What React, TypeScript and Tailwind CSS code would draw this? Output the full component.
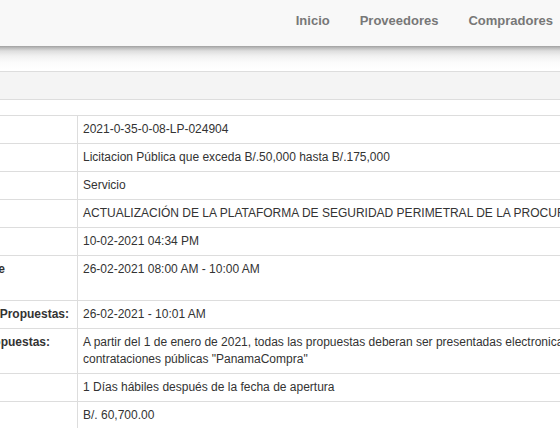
import React from "react";

type Row = {
  label: React.ReactNode;
  labelPad: string;
  value: React.ReactNode;
};

const rows: Row[] = [
  { label: "Número:", labelPad: "pr-[300px]", value: "2021-0-35-0-08-LP-024904" },
  { label: "Modalidad de Contratación:", labelPad: "pr-[200px]", value: "Licitacion Pública que exceda B/.50,000 hasta B/.175,000" },
  { label: "Tipo de Adquisición:", labelPad: "pr-[200px]", value: "Servicio" },
  { label: "Descripción:", labelPad: "pr-[200px]", value: "ACTUALIZACIÓN DE LA PLATAFORMA DE SEGURIDAD PERIMETRAL DE LA PROCURADURÍA DE LA ADMINISTRACIÓN" },
  { label: "Fecha de Publicación:", labelPad: "pr-[200px]", value: "10-02-2021 04:34 PM" },
  {
    label: (
      <>
        <div className="text-right">Fecha y Hora de Presentación de</div>
        <div className="text-left">Propuestas:</div>
      </>
    ),
    labelPad: "pr-[72px]",
    value: "26-02-2021 08:00 AM - 10:00 AM",
  },
  { label: "Fecha y Hora de Apertura de Propuestas:", labelPad: "pr-[8px]", value: "26-02-2021 - 10:01 AM" },
  {
    label: "Forma de Presentación de Propuestas:",
    labelPad: "pr-[27px]",
    value: (
      <>
        <div>A partir del 1 de enero de 2021, todas las propuestas deberan ser presentadas electronicamente en el sistema electrónico de</div>
        <div>contrataciones públicas "PanamaCompra"</div>
      </>
    ),
  },
  { label: "Plazo de Adjudicación:", labelPad: "pr-[200px]", value: "1 Días hábiles después de la fecha de apertura" },
  { label: "Precio de Referencia:", labelPad: "pr-[200px]", value: "B/. 60,700.00" },
];

export default function App() {
  return (
    <div className="w-[560px] h-[428px] overflow-hidden bg-white font-['Liberation_Sans',Arial,sans-serif]">
      {/* Header */}
      <div className="h-[46px] bg-[#f8f8f8] flex justify-end pt-[11px] -mr-[8px]">
        <nav className="flex text-[13px] leading-[20px] font-bold text-[#777777] whitespace-nowrap">
          <span className="px-[15px]">Inicio</span>
          <span className="px-[15px]">Proveedores</span>
          <span className="px-[15px]">Compradores</span>
        </nav>
      </div>
      {/* Shadow */}
      <div className="h-[25px] bg-[linear-gradient(to_bottom,#a0a0a0_0px,#bdbdbd_2px,#dedede_5px,#f1f1f1_10px,#fbfbfb_16px,#ffffff_24px)]" />
      {/* Band */}
      <div className="h-[29px] border-y border-[#dddddd] bg-[#f4f4f4]" />
      <div className="h-[15px]" />
      {/* Table */}
      <div className="-ml-[323px] w-[1400px] border-t border-[#dddddd] text-[12px] leading-[17px] text-[#333333]">
        {rows.map((r, i) => (
          <div key={i} className="flex border-b border-[#dddddd]">
            <div
              className={`w-[401px] shrink-0 border-r border-[#dddddd] py-[5px] pl-[5px] ${r.labelPad} font-bold text-right whitespace-nowrap`}
            >
              {r.label}
            </div>
            <div className="flex-1 py-[5px] px-[5px] whitespace-nowrap">{r.value}</div>
          </div>
        ))}
      </div>
    </div>
  );
}
